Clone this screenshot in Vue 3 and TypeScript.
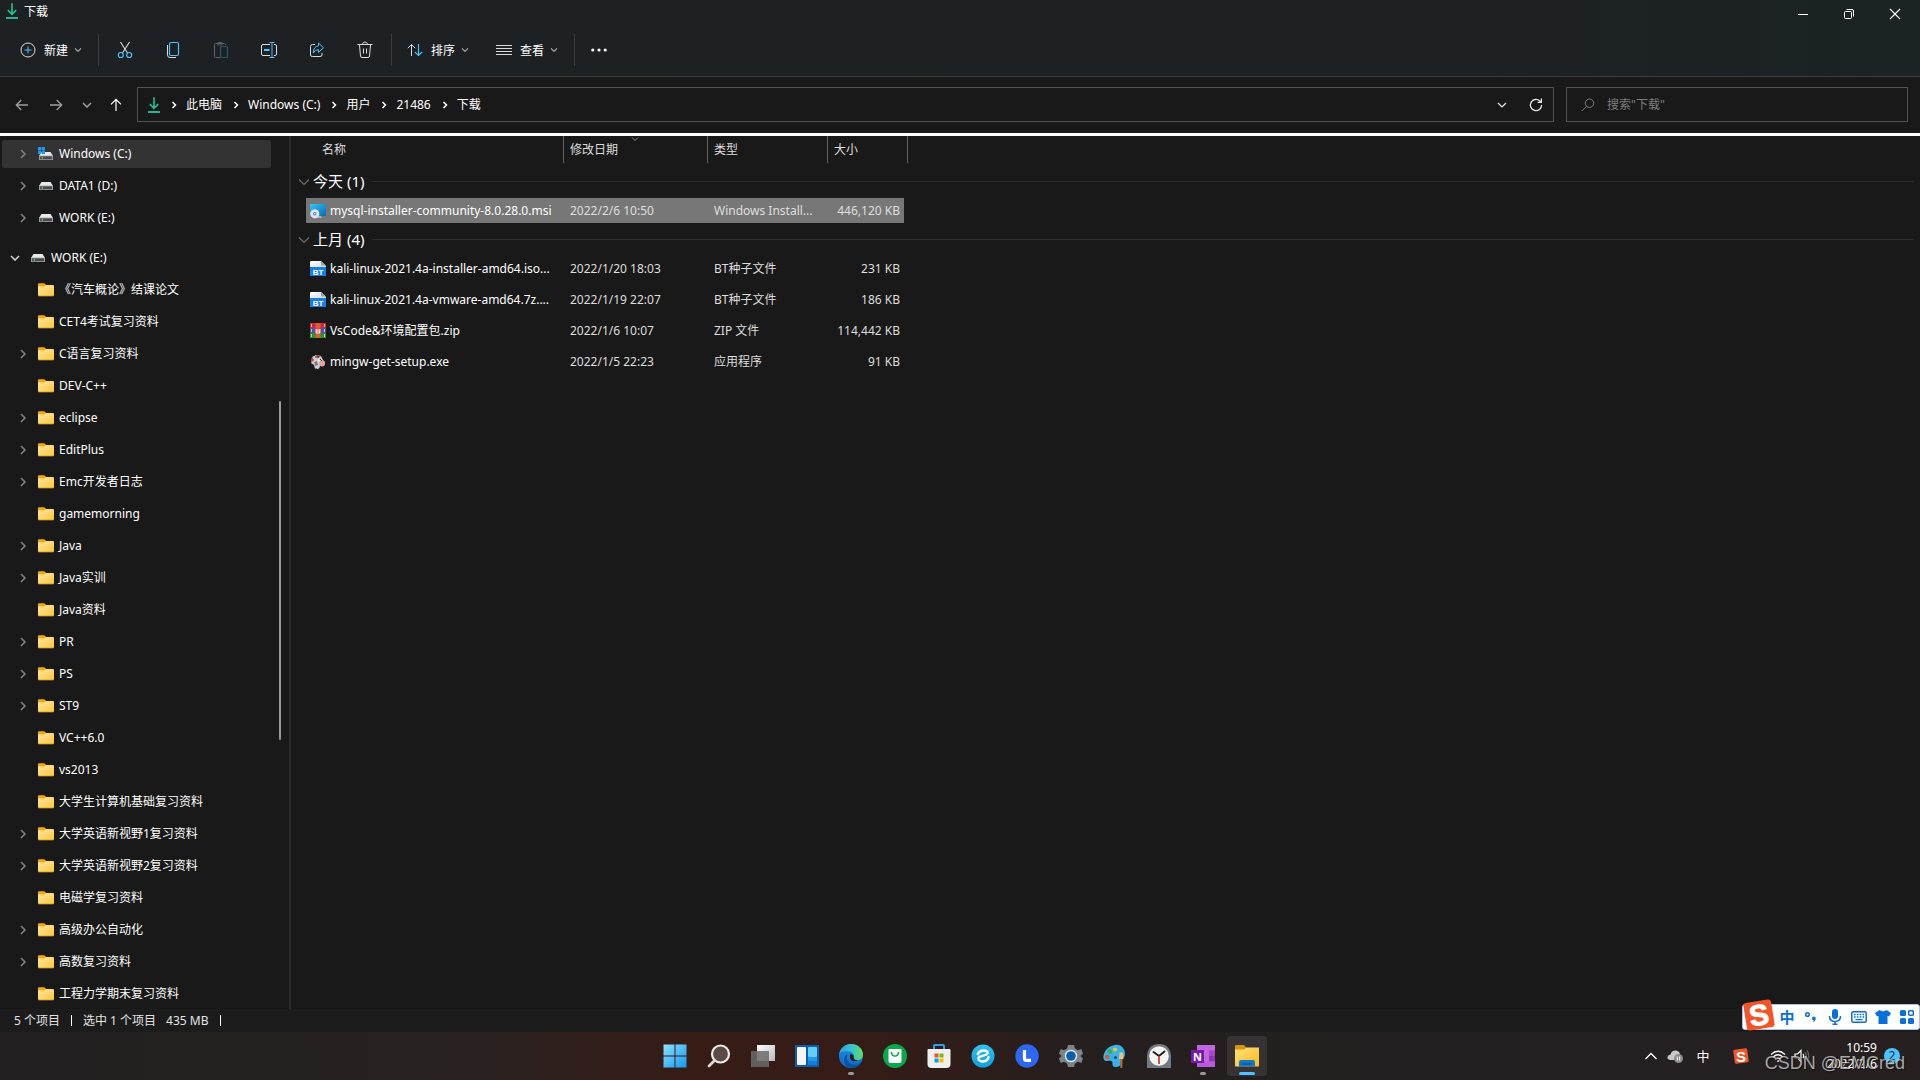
<script setup lang="ts">
import { ref } from 'vue'

interface TreeNode {
  label: string
  expandable: boolean
}

interface FileRow {
  name: string
  date: string
  type: string
  size: string
  icon: 'msi' | 'bt' | 'zip' | 'exe'
}

interface FileGroup {
  label: string
  rows: FileRow[]
}

const drives = ['Windows (C:)', 'DATA1 (D:)', 'WORK (E:)']

const folders: TreeNode[] = [
  { label: '《汽车概论》结课论文', expandable: false },
  { label: 'CET4考试复习资料', expandable: false },
  { label: 'C语言复习资料', expandable: true },
  { label: 'DEV-C++', expandable: false },
  { label: 'eclipse', expandable: true },
  { label: 'EditPlus', expandable: true },
  { label: 'Emc开发者日志', expandable: true },
  { label: 'gamemorning', expandable: false },
  { label: 'Java', expandable: true },
  { label: 'Java实训', expandable: true },
  { label: 'Java资料', expandable: false },
  { label: 'PR', expandable: true },
  { label: 'PS', expandable: true },
  { label: 'ST9', expandable: true },
  { label: 'VC++6.0', expandable: false },
  { label: 'vs2013', expandable: false },
  { label: '大学生计算机基础复习资料', expandable: false },
  { label: '大学英语新视野1复习资料', expandable: true },
  { label: '大学英语新视野2复习资料', expandable: true },
  { label: '电磁学复习资料', expandable: false },
  { label: '高级办公自动化', expandable: true },
  { label: '高数复习资料', expandable: true },
  { label: '工程力学期末复习资料', expandable: false },
]

const groups: FileGroup[] = [
  {
    label: '今天 (1)',
    rows: [
      { name: 'mysql-installer-community-8.0.28.0.msi', date: '2022/2/6 10:50', type: 'Windows Install...', size: '446,120 KB', icon: 'msi' },
    ],
  },
  {
    label: '上月 (4)',
    rows: [
      { name: 'kali-linux-2021.4a-installer-amd64.iso...', date: '2022/1/20 18:03', type: 'BT种子文件', size: '231 KB', icon: 'bt' },
      { name: 'kali-linux-2021.4a-vmware-amd64.7z....', date: '2022/1/19 22:07', type: 'BT种子文件', size: '186 KB', icon: 'bt' },
      { name: 'VsCode&环境配置包.zip', date: '2022/1/6 10:07', type: 'ZIP 文件', size: '114,442 KB', icon: 'zip' },
      { name: 'mingw-get-setup.exe', date: '2022/1/5 22:23', type: '应用程序', size: '91 KB', icon: 'exe' },
    ],
  },
]

const crumbs = ['此电脑', 'Windows (C:)', '用户', '21486', '下载']

const selectedFile = ref('mysql-installer-community-8.0.28.0.msi')
const query = ref('')
</script>

<template>
  <div class="desktop">
    <svg class="defs" width="0" height="0" aria-hidden="true">
      <defs>
        <linearGradient id="g-folder" x1="0" y1="0" x2="1" y2="1">
          <stop offset="0" stop-color="#ffe9a6" />
          <stop offset="1" stop-color="#fbc63c" />
        </linearGradient>
        <linearGradient id="g-win" x1="0" y1="0" x2="1" y2="1">
          <stop offset="0" stop-color="#8fe0ff" />
          <stop offset="1" stop-color="#1398ee" />
        </linearGradient>
        <linearGradient id="g-screen" x1="0" y1="0" x2="1" y2="1">
          <stop offset="0" stop-color="#35c9ee" />
          <stop offset="1" stop-color="#0a66b8" />
        </linearGradient>
        <linearGradient id="g-edge" x1="0" y1="0" x2="1" y2="0">
          <stop offset="0" stop-color="#2aa3e0" />
          <stop offset="0.5" stop-color="#35c1d0" />
          <stop offset="1" stop-color="#63dc5c" />
        </linearGradient>
        <linearGradient id="g-edge2" x1="0" y1="0" x2="0" y2="1">
          <stop offset="0" stop-color="#1c8fe0" />
          <stop offset="1" stop-color="#1169c4" />
        </linearGradient>
        <linearGradient id="g-e" x1="0" y1="0" x2="0" y2="1">
          <stop offset="0" stop-color="#2fc2f2" />
          <stop offset="1" stop-color="#0f9fe0" />
        </linearGradient>
        <linearGradient id="g-front" x1="0" y1="0" x2="1" y2="1">
          <stop offset="0" stop-color="#ffffff" />
          <stop offset="1" stop-color="#b9b9b9" />
        </linearGradient>
        <linearGradient id="g-big-folder" x1="0" y1="0" x2="1" y2="1">
          <stop offset="0" stop-color="#ffdf7c" />
          <stop offset="1" stop-color="#f8bd20" />
        </linearGradient>
        <linearGradient id="g-page" x1="0" y1="0" x2="1" y2="1">
          <stop offset="0" stop-color="#ffffff" />
          <stop offset="1" stop-color="#c9d6e2" />
        </linearGradient>
        <symbol id="i-folder" viewBox="0 0 16 14">
          <path d="M0 1.2Q0 .3 1 .3H6.5L8 2V5H0Z" fill="#f4a90e" />
          <path d="M0 3.5H6.5L8 2H15Q16 2 16 3V12Q16 13 15 13H1Q0 13 0 12Z" fill="url(#g-folder)" />
          <path d="M0 12Q0 13 1 13H15Q16 13 16 12" fill="none" stroke="#d99b1d" stroke-width=".7" />
        </symbol>
        <symbol id="i-drive" viewBox="0 0 14 8">
          <path d="M2.5 0H11.5L14 4H0Z" fill="#e9e9ec" />
          <path d="M0 3.6H14V8H0Z" fill="#9c9ca0" />
          <path d="M1 4.4H13V7.2H1Z" fill="#4b4b4f" />
          <rect x="2.6" y="5.2" width="1.4" height="1.3" fill="#5fe26a" />
        </symbol>
        <symbol id="i-down" viewBox="0 0 12 16">
          <path d="M6 .3V11.5M1.8 7.2 6 11.4 10.2 7.2" fill="none" stroke="#22bd92" stroke-width="1.7" />
          <rect x="0" y="14" width="12" height="2" fill="#1fb695" />
        </symbol>
        <symbol id="i-chev" viewBox="0 0 10 6">
          <path d="M2 1.3 5 4.3 8 1.3" fill="none" stroke="currentColor" stroke-width="1.2" />
        </symbol>
        <symbol id="i-right" viewBox="0 0 8 10">
          <path d="M2 1 6 5 2 9" fill="none" stroke="currentColor" stroke-width="1.6" />
        </symbol>
      </defs>
    </svg>

    <header class="chrome">
      <div class="titlebar">
        <svg width="12" height="16"><use href="#i-down" /></svg>
        <h1>下载</h1>
        <div class="window-buttons">
          <button type="button" aria-label="最小化">
            <svg width="12" height="12" viewBox="0 0 12 12"><path d="M1 6.5H11" stroke="#fff" /></svg>
          </button>
          <button type="button" aria-label="还原">
            <svg width="12" height="12" viewBox="0 0 12 12" fill="none" stroke="#fff"><rect x="1.5" y="3.5" width="7" height="7" rx="1" /><path d="M3.5 1.5H9Q10.5 1.5 10.5 3V8.5" /></svg>
          </button>
          <button type="button" aria-label="关闭">
            <svg width="12" height="12" viewBox="0 0 12 12"><path d="M1 1 11 11M11 1 1 11" stroke="#fff" stroke-width="1.1" /></svg>
          </button>
        </div>
      </div>

      <div class="toolbar" role="toolbar">
        <button type="button" class="tool labelled">
          <svg width="16" height="16" viewBox="0 0 16 16" fill="none"><circle cx="8" cy="8" r="7" stroke="#dcdcdc" /><path d="M8 4.5V11.5M4.5 8H11.5" stroke="#4cc2ff" /></svg>
          <span>新建</span>
          <svg class="chev" width="10" height="6"><use href="#i-chev" /></svg>
        </button>
        <i class="rule"></i>
        <button type="button" class="tool" aria-label="剪切">
          <svg width="16" height="18" viewBox="0 0 16 18" fill="none"><path d="M3.5 1 10.5 12M12.5 1 5.5 12" stroke="#dcdcdc" stroke-width="1.1" /><circle cx="3.8" cy="14" r="2.5" stroke="#4cc2ff" stroke-width="1.2" /><circle cx="12.2" cy="14" r="2.5" stroke="#4cc2ff" stroke-width="1.2" /></svg>
        </button>
        <button type="button" class="tool" aria-label="复制">
          <svg width="16" height="18" viewBox="0 0 16 18" fill="none"><path d="M2.5 4V14Q2.5 16.5 5 16.5H11" stroke="#dcdcdc" /><rect x="4.5" y="1.5" width="9" height="13" rx="1.5" stroke="#4cc2ff" stroke-width="1.2" /></svg>
        </button>
        <button type="button" class="tool" aria-label="粘贴">
          <svg width="16" height="18" viewBox="0 0 16 18" fill="none"><path d="M7 16.5H2.5Q1.5 16.5 1.5 15.5V3.5Q1.5 2.5 2.5 2.5H11.5Q12.5 2.5 12.5 4" stroke="#5f6365" /><rect x="4.5" y="1.5" width="5" height="2.5" rx="1" stroke="#5f6365" /><rect x="7.5" y="5.5" width="7" height="11" rx="1" stroke="#2f5468" stroke-width="1.2" /></svg>
        </button>
        <button type="button" class="tool" aria-label="重命名">
          <svg width="18" height="18" viewBox="0 0 18 18" fill="none"><path d="M10 3.5H3Q1.5 3.5 1.5 5V13Q1.5 14.5 3 14.5H10M14 3.5H15Q16.5 3.5 16.5 5V13Q16.5 14.5 15 14.5H14" stroke="#dcdcdc" /><path d="M12 1.5V16.5M9.5 1.5H14.5M9.5 16.5H14.5" stroke="#4cc2ff" /><path d="M4 9H9.5" stroke="#4cc2ff" stroke-width="2" /></svg>
        </button>
        <button type="button" class="tool" aria-label="共享">
          <svg width="16" height="18" viewBox="0 0 16 18" fill="none"><path d="M6 3.5H3.5Q1.5 3.5 1.5 5.5V14Q1.5 15.5 3.5 15.5H11Q13 15.5 13 14V12" stroke="#dcdcdc" /><path d="M9.5 2 14.5 6.8 9.5 11.5V8.7Q6 8.7 4.2 12 4.5 5.5 9.5 4.8Z" stroke="#4cc2ff" stroke-linejoin="round" /></svg>
        </button>
        <button type="button" class="tool" aria-label="删除">
          <svg width="16" height="18" viewBox="0 0 16 18" fill="none" stroke="#dcdcdc"><path d="M.5 3.500H15.500M5.500 3Q6 1 8 1T10.500 3M2.500 4 3.500 15Q3.700 16.500 5 16.500H11Q12.300 16.500 12.500 15L13.500 4M6.500 7.500V12.500M9.500 7.500V12.500" /></svg>
        </button>
        <i class="rule"></i>
        <button type="button" class="tool labelled">
          <svg width="16" height="14" viewBox="0 0 16 14" fill="none"><path d="M4.5 13V1.5M.8 5.2 4.5 1.5 8.2 5.2" stroke="#dcdcdc" /><path d="M11.5 1V12.5M7.8 8.8 11.5 12.5 15.2 8.8" stroke="#4cc2ff" stroke-width="1.2" /></svg>
          <span>排序</span>
          <svg class="chev" width="10" height="6"><use href="#i-chev" /></svg>
        </button>
        <button type="button" class="tool labelled">
          <svg width="16" height="12" viewBox="0 0 16 12"><path d="M0 1.5H16M0 4.5H16M0 7.5H16M0 10.5H16" stroke="#dcdcdc" /></svg>
          <span>查看</span>
          <svg class="chev" width="10" height="6"><use href="#i-chev" /></svg>
        </button>
        <i class="rule"></i>
        <button type="button" class="tool more" aria-label="更多">
          <svg width="16" height="4" viewBox="0 0 16 4" fill="#fff"><circle cx="1.8" cy="2" r="1.6" /><circle cx="8" cy="2" r="1.6" /><circle cx="14.2" cy="2" r="1.6" /></svg>
        </button>
      </div>
    </header>

    <div class="navrow">
      <button type="button" class="nav dim" aria-label="后退">
        <svg width="14" height="12" viewBox="0 0 14 12" fill="none" stroke="currentColor" stroke-width="1.3"><path d="M13 6H1.5M6.3 1 1.3 6 6.3 11" /></svg>
      </button>
      <button type="button" class="nav dim" aria-label="前进">
        <svg width="14" height="12" viewBox="0 0 14 12" fill="none" stroke="currentColor" stroke-width="1.3"><path d="M1 6H12.5M7.7 1 12.7 6 7.7 11" /></svg>
      </button>
      <button type="button" class="nav narrow dim" aria-label="最近位置">
        <svg width="10" height="6" viewBox="0 0 10 6" fill="none" stroke="currentColor" stroke-width="1.5"><path d="M1 1 5 5 9 1" /></svg>
      </button>
      <button type="button" class="nav up" aria-label="上移">
        <svg width="12" height="14" viewBox="0 0 12 14" fill="none" stroke="#fff" stroke-width="1.2"><path d="M6 13V1.5M1 6.3 6 1.3 11 6.3" /></svg>
      </button>
      <nav class="address" aria-label="地址">
        <svg width="12" height="16"><use href="#i-down" /></svg>
        <template v-for="c in crumbs" :key="c">
          <svg class="sep" width="8" height="10" viewBox="0 0 8 10"><path d="M2.5 2 5.5 5 2.5 8" fill="none" stroke="#fff" stroke-width="1.5" /></svg>
          <a href="#">{{ c }}</a>
        </template>
        <span class="grow"></span>
        <button type="button" class="nav" aria-label="历史记录">
          <svg width="10" height="6" viewBox="0 0 10 6" fill="none" stroke="#e8e8e8" stroke-width="1.2"><path d="M1 1 5 5 9 1" /></svg>
        </button>
        <button type="button" class="nav" aria-label="刷新">
          <svg width="14" height="14" viewBox="0 0 14 14" fill="none" stroke="#e8e8e8" stroke-width="1.3"><path d="M12.6 7A5.6 5.6 0 1 1 10.8 2.9L12 4" /><path d="M12.4 .5V4.3H8.6" /></svg>
        </button>
      </nav>
      <label class="search">
        <svg width="14" height="14" viewBox="0 0 14 14" fill="none" stroke="#7b7b7b"><circle cx="8.5" cy="5.2" r="4.2" /><path d="M5.5 8.3 .8 13" /></svg>
        <input v-model="query" type="text" placeholder="搜索&quot;下载&quot;" aria-label="搜索" />
      </label>
    </div>

    <main class="body">
      <aside class="sidebar">
        <ul>
          <li v-for="(d, i) in drives" :key="d">
            <button type="button" class="node" :class="{ current: i === 0 }">
              <svg class="twist" width="8" height="10"><use href="#i-right" /></svg>
              <svg v-if="i === 0" class="glyph" width="16" height="14" viewBox="0 0 16 14">
                <use href="#i-drive" x="1" y="5" width="14" height="8" />
                <path d="M0 0H3.2V3.2H0ZM3.8 0H7V3.2H3.8ZM0 3.8H3.2V7H0ZM3.8 3.8H7V7H3.8Z" fill="#1b9bea" />
              </svg>
              <svg v-else class="glyph" width="16" height="8"><use href="#i-drive" x="1" width="14" height="8" /></svg>
              <span>{{ d }}</span>
            </button>
          </li>
        </ul>
        <ul class="tree">
          <li>
            <button type="button" class="node root">
              <svg width="10" height="6" viewBox="0 0 10 6" fill="none" stroke="#d0d0d0" stroke-width="1.6"><path d="M1 1 5 5 9 1" /></svg>
              <svg class="glyph" width="16" height="8"><use href="#i-drive" x="1" width="14" height="8" /></svg>
              <span>WORK (E:)</span>
            </button>
          </li>
          <li v-for="f in folders" :key="f.label">
            <button type="button" class="node">
              <svg class="twist" width="8" height="10"><use v-if="f.expandable" href="#i-right" /></svg>
              <svg class="glyph" width="16" height="14"><use href="#i-folder" /></svg>
              <span>{{ f.label }}</span>
            </button>
          </li>
        </ul>
        <div class="thumb"></div>
      </aside>

      <section class="listing">
        <table>
          <colgroup>
            <col class="c-name" /><col class="c-date" /><col class="c-type" /><col class="c-size" /><col />
          </colgroup>
          <thead>
            <tr>
              <th scope="col"><div class="head first">名称</div></th>
              <th scope="col">
                <div class="head">修改日期
                  <svg class="sorted" width="8" height="5" viewBox="0 0 8 5"><path d="M1 .5 4 3.5 7 .5" fill="none" stroke="#8a8a8a" /></svg>
                </div>
              </th>
              <th scope="col"><div class="head">类型</div></th>
              <th scope="col"><div class="head">大小</div></th>
              <td></td>
            </tr>
          </thead>
          <tbody v-for="g in groups" :key="g.label">
            <tr class="group">
              <th colspan="5" scope="rowgroup">
                <div>
                  <svg width="12" height="8" viewBox="0 0 12 8"><path d="M1 1.5 6 6.5 11 1.5" fill="none" stroke="#6b6b6b" stroke-width="1.2" /></svg>
                  <span>{{ g.label }}</span>
                  <hr />
                </div>
              </th>
            </tr>
            <tr v-for="r in g.rows" :key="r.name" class="file" :class="{ selected: r.name === selectedFile }" @click="selectedFile = r.name">
              <td>
                <div class="cell name">
                  <svg v-if="r.icon === 'msi'" width="16" height="16" viewBox="0 0 16 16">
                    <rect x="0" y="1" width="16" height="12" rx=".5" fill="url(#g-screen)" />
                    <path d="M4 15 6 13H11L12 15Z" fill="#a9b3ba" />
                    <circle cx="4.8" cy="10.800" r="4.600" fill="#dde3e8" />
                    <circle cx="4.8" cy="10.800" r="1.700" fill="#3c86b8" />
                    <circle cx="4.8" cy="10.800" r=".800" fill="#fff" />
                  </svg>
                  <svg v-else-if="r.icon === 'bt'" width="16" height="16" viewBox="0 0 16 16">
                    <path d="M0 1Q0 0 1 0H11L16 5V8H0Z" fill="url(#g-page)" />
                    <path d="M11 0V4.5H16Z" fill="#8fa5b8" />
                    <rect x="0" y="6" width="16" height="9" fill="#1a7fe0" />
                    <text x="8" y="14" text-anchor="middle" font-size="8" font-weight="700" fill="#fff" font-family="Liberation Sans, sans-serif">BT</text>
                  </svg>
                  <svg v-else-if="r.icon === 'zip'" width="16" height="16" viewBox="0 0 16 16">
                    <rect y="0" width="16" height="5" fill="#c8264a" />
                    <rect y="5" width="16" height="5" fill="#4a56b5" />
                    <rect y="10" width="16" height="5" fill="#1f9440" />
                    <path d="M1.5 1V4M1.5 6V9M1.5 11V14M14.5 1V4M14.5 6V9M14.5 11V14" stroke="#e8c85a" />
                    <rect x="5.5" width="5" height="15" fill="#d9602c" />
                    <rect x="5" y="5" width="6" height="6" rx="1" fill="#e8452c" />
                    <path d="M6.2 6V10H9.8V6M8 6V9" fill="none" stroke="#fff" />
                  </svg>
                  <svg v-else width="16" height="16" viewBox="0 0 16 16">
                    <path d="M2 3 6 1 11 2 13 6 15 8 14 12 10 12 9 15H5L4 11 1 9Z" fill="#cfcfcf" />
                    <path d="M2 3 4 6 1 9ZM6 1 8 4 11 2Z" fill="#c23b3b" />
                    <path d="M4 8 7 7 8 11 5 12Z" fill="#7b7f86" />
                    <circle cx="12" cy="9.5" r="3" fill="#e5a3a3" />
                    <path d="M5 3H9M10 5 12 7M6 14V16M9 14V16" stroke="#2b2b2b" />
                    <path d="M8 5 10 7 8 8Z" fill="#fff" />
                  </svg>
                  <span>{{ r.name }}</span>
                </div>
              </td>
              <td><div class="cell">{{ r.date }}</div></td>
              <td><div class="cell">{{ r.type }}</div></td>
              <td><div class="cell size">{{ r.size }}</div></td>
              <td></td>
            </tr>
          </tbody>
        </table>
      </section>
    </main>

    <footer class="status">
      <span>5 个项目</span><i></i><span>选中 1 个项目</span><span class="amount">435 MB</span><i></i>
    </footer>

    <div class="taskbar">
      <div></div>
      <div class="apps">
        <button type="button" aria-label="开始">
          <svg width="24" height="24" viewBox="0 0 24 24"><path d="M.5 .5H11.5V11.5H.5ZM12.5 .5H23.5V11.5H12.5ZM.5 12.5H11.5V23.5H.5ZM12.5 12.5H23.5V23.5H12.5Z" fill="url(#g-win)" /></svg>
        </button>
        <button type="button" aria-label="搜索">
          <svg width="24" height="24" viewBox="0 0 24 24"><circle cx="13.5" cy="10" r="8.5" fill="#5d4a46" stroke="#ececec" stroke-width="2.2" /><path d="M7.5 16.5 2 22" stroke="#d8d8d8" stroke-width="2.8" stroke-linecap="round" /></svg>
        </button>
        <button type="button" aria-label="任务视图">
          <svg width="24" height="24" viewBox="0 0 24 24"><rect x="6" y="1" width="18" height="16" fill="url(#g-front)" /><rect x="0" y="7" width="18" height="16" fill="#6b6b6b" opacity=".85" /></svg>
        </button>
        <button type="button" aria-label="小组件">
          <svg width="24" height="24" viewBox="0 0 24 24"><rect x="0" y="1" width="24" height="22" rx="1" fill="#0d5db0" /><rect x="2" y="3" width="9" height="18" rx="1" fill="#f4f4f4" /><rect x="13" y="3" width="9" height="10" rx="1" fill="#63cdfb" /><rect x="13" y="13" width="9" height="4" fill="#1f9bea" /><rect x="13" y="17" width="9" height="4" fill="#157fd6" /></svg>
        </button>
        <button type="button" class="running" aria-label="Microsoft Edge">
          <svg width="24" height="24" viewBox="0 0 24 24"><circle cx="12" cy="12" r="12" fill="url(#g-edge2)" /><path d="M.3 9.5C1.5 4 6.3 0 12 0 19 0 24 5 24 10.5 24 14 21.5 16 18.5 16 15.5 16 14.3 14.8 14.8 13.8 15.8 12 14.6 8.2 10.5 7.6 6.5 7 2.5 7.5 .3 9.5Z" fill="url(#g-edge)" /><path d="M9 10C7 12 7.5 17.5 12 19.8 15.5 21.5 19.5 20.5 22.4 18 20.5 21.8 16.5 24 12 24 7 24 4.5 19 5 15.5 5.4 12.5 7 10.8 9 10Z" fill="#0d55a4" /><path d="M11.5 10Q15.2 10.5 14.7 13.6C14.3 15 15.5 16.2 18.5 16.2 15.5 18.5 11 16.5 11 13.5Q10.8 11 11.5 10Z" fill="#301b17" /></svg>
        </button>
        <button type="button" aria-label="应用商店">
          <svg width="24" height="24" viewBox="0 0 24 24"><circle cx="12" cy="12" r="12" fill="#0aa84c" /><path d="M5.5 6Q5.5 5 6.5 5H17.5Q18.5 5 18.5 6V17Q18.5 19 16.5 19H7.5Q5.5 19 5.5 17Z" fill="#fff" /><path d="M8.5 8.5Q9 12 12 12T15.500 8.500" fill="none" stroke="#0aa84c" stroke-width="1.6" stroke-linecap="round" /></svg>
        </button>
        <button type="button" aria-label="Microsoft Store">
          <svg width="24" height="24" viewBox="0 0 24 24"><path d="M7 6V2Q7 1 8 1H16Q17 1 17 2V6" fill="none" stroke="#2aa5ea" stroke-width="2" /><path d="M.5 6Q.5 5 1.5 5H22.5Q23.5 5 23.5 6V20Q23.5 24 19.5 24H4.5Q.5 24 .5 20Z" fill="#efefef" /><rect x="7.5" y="9.5" width="4" height="4" fill="#f25022" /><rect x="12.5" y="9.5" width="4" height="4" fill="#7fba00" /><rect x="7.5" y="14.5" width="4" height="4" fill="#00a4ef" /><rect x="12.5" y="14.5" width="4" height="4" fill="#ffb900" /></svg>
        </button>
        <button type="button" aria-label="浏览器">
          <svg width="24" height="24" viewBox="0 0 24 24"><circle cx="12" cy="12" r="11.5" fill="url(#g-e)" /><path d="M6.8 10.2Q8.5 6.5 12.5 6.5 17 6.8 16.6 9.2 15.8 10.8 12.5 11.6L8.5 12.8Q6.600 13.800 8 16 10 18 13.500 17.300 16.800 16.300 17.600 13" fill="none" stroke="#fff" stroke-width="2.4" stroke-linecap="round" /></svg>
        </button>
        <button type="button" aria-label="联想">
          <svg width="24" height="24" viewBox="0 0 24 24"><circle cx="12" cy="12" r="11.7" fill="#2f66f2" /><path d="M9.5 6V14.5Q9.5 16.3 11.3 16.3H16" fill="none" stroke="#fff" stroke-width="3.2" /></svg>
        </button>
        <button type="button" aria-label="设置">
          <svg width="24" height="24" viewBox="0 0 24 24"><path d="M9 1H15L16 4.5 19 6.2 22.3 5 24 9.5 21.5 12 24 14.5 22.3 19 19 17.8 16 19.5 15 23H9L8 19.5 5 17.8 1.7 19 0 14.5 2.5 12 0 9.5 1.7 5 5 6.2 8 4.5Z" fill="#7d858c" /><circle cx="12" cy="12" r="6.2" fill="#e6edf3" /><circle cx="12" cy="12" r="4.8" fill="#0f5ea8" /></svg>
        </button>
        <button type="button" aria-label="画图">
          <svg width="24" height="24" viewBox="0 0 24 24"><path d="M12 1C18 0 22.5 5 22 11 21.7 14 19 14 18 16 17 19 19 23 13 23 10 23 9 21 9.5 18.5 9.7 16.5 7 16.5 4.5 17 1.5 17.5 0 15 .5 12 1.3 6.5 6 1.5 12 1Z" fill="#35b2ea" /><circle cx="12" cy="5.5" r="2.1" fill="#f6c12c" /><circle cx="7" cy="7.8" r="2.2" fill="#4aa83a" /><circle cx="4.2" cy="13" r="2.2" fill="#e2552c" /><circle cx="12.5" cy="13.5" r="1.6" fill="#16527c" /><path d="M16.5 8.5H20L20.5 15H16Z" fill="#efc27e" /><path d="M17 15H19.6L19.2 24H17.4Z" fill="#b3713a" /></svg>
        </button>
        <button type="button" aria-label="时钟">
          <svg width="24" height="24" viewBox="0 0 24 24"><path d="M0 12Q1 0 12 0T24 12V24H0Z" fill="#6f7a83" /><circle cx="12" cy="12" r="9.8" fill="#f4f4f4" /><path d="M12 12 6.5 8M12 12 17.5 7.5" stroke="#222" stroke-width="2" stroke-linecap="round" /><path d="M12 12V20" stroke="#c8442c" stroke-width="1.8" /></svg>
        </button>
        <button type="button" class="running" aria-label="OneNote">
          <svg width="24" height="24" viewBox="0 0 24 24"><path d="M6 1H24V23H6Z" fill="#c266e0" /><path d="M18 6.5H24V12H18Z" fill="#a944cc" /><path d="M18 12H24V17.5H18Z" fill="#8e35b8" /><path d="M6 17.5H24V23H6Z" fill="#b04fd6" opacity=".5" /><rect x="0" y="6" width="13" height="13" fill="#7719aa" /><text x="6.5" y="16.5" text-anchor="middle" font-size="11" font-weight="700" fill="#fff" font-family="Open Sans, sans-serif">N</text></svg>
        </button>
        <button type="button" class="active" aria-label="文件资源管理器">
          <svg width="24" height="24" viewBox="0 0 24 24"><path d="M0 2Q0 1 1 1H9L11 3.5V7H0Z" fill="#d8960c" /><path d="M0 5.5H9.5L11 3.5H24V22.5H0Z" fill="url(#g-big-folder)" /><path d="M4 22.5V18Q4 16 6 16H18Q20 16 20 18V22.5Z" fill="#1577c4" /><path d="M7 20H17" stroke="#0c5c9c" stroke-width="1.6" /></svg>
        </button>
      </div>

      <div class="tray">
        <button type="button" class="t-icon" aria-label="显示隐藏的图标">
          <svg width="14" height="8" viewBox="0 0 14 8"><path d="M1.5 7 7 1.5 12.5 7" fill="none" stroke="#fff" stroke-width="1.3" /></svg>
        </button>
        <button type="button" class="t-icon" aria-label="OneDrive">
          <svg width="16" height="14" viewBox="0 0 16 14"><path d="M4 11Q0 11 .5 8 1 5.5 3.5 5.5 4.5 1.5 8.5 1.5 12 1.5 13 5V11Z" fill="#c9c9c9" /><circle cx="11.5" cy="9.5" r="4.5" fill="#8d8d8d" /><path d="M10.3 7.5V11.5M12.7 7.5V11.5" stroke="#fff" /></svg>
        </button>
        <button type="button" class="t-icon lang">中</button>
        <button type="button" class="t-icon sogou" aria-label="搜狗输入法">
          <svg width="16" height="16" viewBox="0 0 32 32"><rect x="2" y="2" width="28" height="28" rx="3" fill="#f0562a" transform="rotate(-8 16 16)" /><text x="16" y="27" text-anchor="middle" font-size="30" font-weight="700" fill="#fff" font-family="Liberation Sans, sans-serif">S</text></svg>
        </button>
        <button type="button" class="t-icon" aria-label="网络">
          <svg width="16" height="14" viewBox="0 0 16 14" fill="none" stroke="#fff" stroke-width="1.2"><path d="M1 5.5Q8-1 15 5.5M3.2 8Q8 3.5 12.8 8M5.5 10.3Q8 8 10.5 10.3" /><circle cx="8" cy="12" r="1" fill="#fff" stroke="none" /></svg>
        </button>
        <button type="button" class="t-icon" aria-label="音量">
          <svg width="16" height="14" viewBox="0 0 16 14" fill="none" stroke-width="1.2"><path d="M1 5H3.5L7 1.5V12.5L3.5 9H1Z" stroke="#fff" /><path d="M9 4.8Q10.5 7 9 9.2" stroke="#fff" /><path d="M11 3Q13.5 7 11 11M13 1.5Q16.5 7 13 12.5" stroke="#6a6668" /></svg>
        </button>
        <time class="clock" datetime="2022-02-06T10:59"><span>10:59</span><span>2022/2/6</span></time>
        <span class="badge">2</span>
      </div>
    </div>

    <div class="ime">
      <svg class="ime-logo" width="32" height="32" viewBox="0 0 32 32"><rect x="2" y="2" width="28" height="28" rx="3" fill="#f0562a" transform="rotate(-9 16 16)" /><text x="16" y="26" text-anchor="middle" font-size="29" font-weight="700" fill="#fff" stroke="#fff" font-family="Liberation Sans, sans-serif" transform="rotate(-9 16 16)">S</text></svg>
      <button type="button" class="zh">中</button>
      <button type="button" aria-label="标点">
        <svg width="14" height="14" viewBox="0 0 14 14"><circle cx="3.5" cy="4.5" r="1.8" fill="none" stroke="#0a6fd8" stroke-width="1.5" /><path d="M8 8.5Q8 6.5 9.8 6.5 12 6.7 11.8 9 11.3 11.5 8.5 12.5 9.7 11.3 9.8 10.3 8 10 8 8.5Z" fill="#0a6fd8" /></svg>
      </button>
      <button type="button" aria-label="语音">
        <svg width="14" height="16" viewBox="0 0 14 16"><rect x="4" y="0" width="6" height="10" rx="3" fill="#0a6fd8" /><path d="M1.5 7Q1.5 12.5 7 12.5T12.500 7M7 12.500V15M4.500 15.200H9.500" fill="none" stroke="#0a6fd8" stroke-width="1.5" /></svg>
      </button>
      <button type="button" aria-label="键盘">
        <svg width="16" height="12" viewBox="0 0 16 12" fill="none" stroke="#0a6fd8"><rect x=".8" y=".8" width="14.4" height="10.4" rx="1.5" stroke-width="1.5" /><path d="M3 3.5H13M3 6H13" stroke-width="1.5" stroke-dasharray="1.6 1.2" /><path d="M4.5 8.6H11.5" stroke-width="1.3" /></svg>
      </button>
      <button type="button" aria-label="皮肤">
        <svg width="16" height="14" viewBox="0 0 16 14"><path d="M4.5 0Q8 2.5 11.5 0L16 3 14 6.5 12.5 6V14H3.5V6L2 6.5 0 3Z" fill="#0a6fd8" /></svg>
      </button>
      <button type="button" aria-label="工具箱">
        <svg width="14" height="14" viewBox="0 0 14 14" fill="#0a6fd8"><rect x="0" y="0" width="6" height="6" rx="1.5" /><rect x="8.7" y=".7" width="4.6" height="4.6" rx="1" fill="none" stroke="#0a6fd8" stroke-width="1.5" /><rect x="0" y="8" width="6" height="6" rx="1.5" /><rect x="8" y="8" width="6" height="6" rx="1.5" /></svg>
      </button>
    </div>

    <p class="watermark">CSDN @EMCred</p>
  </div>
</template>

<style>
body {
  margin: 0;
  background: #191919;
}
</style>

<style scoped>
.desktop {
  position: relative;
  display: flex;
  flex-direction: column;
  min-height: 100vh;
  overflow: hidden;
  background: #191919;
  color: #fff;
  font: 12px/16px "Noto Sans", "Noto Sans CJK SC", sans-serif;
}
.defs {
  position: absolute;
}
button {
  display: flex;
  align-items: center;
  justify-content: center;
  margin: 0;
  padding: 0;
  border: 0;
  background: none;
  color: inherit;
  font: inherit;
}
svg {
  display: block;
  flex: none;
}
h1,
p,
ul {
  margin: 0;
  padding: 0;
  font: inherit;
  list-style: none;
}

/* Title bar and command bar */
.chrome {
  border-bottom: 1px solid #3d3d3d;
  background: linear-gradient(90deg, #1d2124, #1e2122 40%, #1e2124 75%, #1b2325);
}
.titlebar {
  display: flex;
  align-items: flex-start;
  gap: 6px;
  height: 24px;
  padding: 3px 2px 0 6px;
  box-sizing: border-box;
}
.titlebar h1 {
  line-height: 18px;
}
.window-buttons {
  display: flex;
  margin-left: auto;
}
.window-buttons button {
  width: 46px;
  height: 22px;
}
.toolbar {
  display: flex;
  align-items: center;
  height: 52px;
  padding-left: 7px;
}
.tool {
  width: 48px;
  height: 32px;
}
.tool.labelled {
  width: auto;
  padding: 0 13px;
}
.tool.more {
  width: 44px;
}
.tool span {
  margin: 0 5px 0 8px;
  padding-top: 2px;
}
.chev {
  color: #a5a8a9;
}
.rule {
  width: 1px;
  height: 32px;
  margin: 0 2px;
  background: #3a3d3e;
}

/* Address row */
.navrow {
  display: flex;
  align-items: center;
  height: 55px;
  padding: 0 12px 1px 5px;
  border-bottom: 3px solid #fff;
}
.nav {
  width: 34px;
  height: 32px;
}
.nav.narrow {
  width: 28px;
}
.nav.up {
  width: 30px;
  margin-right: 6px;
}
.nav.dim {
  color: #a0a0a0;
}
.address,
.search {
  display: flex;
  align-items: center;
  height: 35px;
  box-sizing: border-box;
  border: 1px solid #535353;
}
.address {
  flex: 1;
  padding: 0 0 0 10px;
}
.address a {
  color: #fff;
  text-decoration: none;
  white-space: nowrap;
}
.sep {
  margin: 0 8px 0 10px;
}
.grow {
  flex: 1;
}
.search {
  width: 342px;
  margin-left: 12px;
  padding-left: 14px;
  gap: 12px;
}
.search input {
  flex: 1;
  min-width: 0;
  padding: 0;
  border: 0;
  outline: 0;
  background: none;
  color: #fff;
  font: inherit;
}
.search input::placeholder {
  color: #7d7d7d;
  opacity: 1;
}

/* Folder tree */
.body {
  display: flex;
  flex: 1;
}
.sidebar {
  position: relative;
  flex: none;
  width: 289px;
  padding-top: 4px;
  padding-bottom: 1px;
  border-right: 2px solid #2b2b2b;
}
.sidebar li {
  margin-bottom: 4px;
}
.sidebar li:last-child {
  margin-bottom: 0;
}
.tree {
  margin-top: 12px;
}
.node {
  justify-content: flex-start;
  width: 269px;
  height: 28px;
  margin-left: 2px;
  padding-left: 17px;
  box-sizing: border-box;
  border-radius: 2px;
  white-space: nowrap;
}
.node.current {
  background: #333;
}
.node.root {
  padding-left: 8px;
}
.twist {
  color: #808080;
}
.glyph {
  margin: 0 5px 0 11px;
}
.node.root .glyph {
  margin-left: 10px;
}
.thumb {
  position: absolute;
  top: 265px;
  right: 8px;
  width: 2px;
  height: 339px;
  border-radius: 1px;
  background: #9a9a9a;
}

/* File list */
.listing {
  flex: 1;
  min-width: 0;
  padding-right: 7px;
}
table {
  width: 100%;
  table-layout: fixed;
  border-collapse: collapse;
}
th,
td {
  padding: 0;
  font-weight: 400;
  text-align: left;
  white-space: nowrap;
}
.c-name {
  width: 273px;
}
.c-date {
  width: 144px;
}
.c-type {
  width: 120px;
}
.c-size {
  width: 80px;
}
.head {
  position: relative;
  height: 27px;
  margin-bottom: 5px;
  padding-left: 6px;
  box-sizing: border-box;
  border-right: 1px solid #636363;
  color: #dedede;
  line-height: 28px;
}
.head.first {
  padding-left: 31px;
}
.sorted {
  position: absolute;
  top: 1px;
  left: 67px;
}
.group div {
  display: flex;
  align-items: center;
  height: 27px;
  padding-left: 7px;
  font-size: 15px;
}
.group span {
  margin: 0 8px 0 3px;
  padding-bottom: 2px;
}
.group hr {
  flex: 1;
  height: 1px;
  margin: 0;
  border: 0;
  background: #2e2e2e;
}
.cell {
  height: 25px;
  margin: 3px 0;
  padding-left: 6px;
  box-sizing: border-box;
  color: #dedede;
  line-height: 25px;
}
.cell.name {
  display: flex;
  align-items: center;
  gap: 4px;
  margin-left: 15px;
  padding-left: 4px;
  color: #fff;
}
.cell.size {
  margin-right: 4px;
  padding-right: 4px;
  text-align: right;
}
.selected .cell {
  background: #777;
}

/* Status bar */
.status {
  display: flex;
  align-items: center;
  height: 23px;
  padding-left: 14px;
  background: #1c1c1c;
  color: #e4e4e4;
}
.status i {
  width: 1px;
  height: 11px;
  margin: 0 11px;
  background: #fff;
}
.amount {
  margin-left: 10px;
}

/* Taskbar */
.taskbar {
  display: grid;
  grid-template-columns: 1fr auto 1fr;
  align-items: center;
  height: 48px;
  padding-left: 2px;
  background: linear-gradient(90deg, #222021, #282120 25%, #371c16 36%, #341c17 46%, #251f1e 56%, #242021 75%, #262021);
}
.apps {
  display: flex;
}
.apps button {
  position: relative;
  width: 44px;
  height: 40px;
}
.apps .running::after,
.apps .active::after {
  content: "";
  position: absolute;
  bottom: 1px;
  left: 19px;
  width: 6px;
  height: 3px;
  border-radius: 2px;
  background: #9b9797;
}
.apps .active {
  width: 40px;
  margin: 0 2px;
  border-radius: 4px;
  background: #373334;
}
.apps .active::after {
  left: 12px;
  width: 16px;
  background: #4cc2ff;
}
.tray {
  display: flex;
  align-items: center;
  justify-content: flex-end;
  padding-right: 20px;
}
.t-icon {
  width: 24px;
  height: 32px;
}
.lang {
  width: 32px;
  font-size: 13px;
}
.sogou {
  width: 44px;
  margin-right: 3px;
}
.clock {
  display: flex;
  flex-direction: column;
  width: 63px;
  text-align: right;
}
.badge {
  width: 16px;
  height: 16px;
  margin-left: 7px;
  border-radius: 8px;
  background: #4cc2ff;
  color: #15303c;
  text-align: center;
}

/* Floating input method bar */
.ime {
  position: absolute;
  right: 0;
  bottom: 50px;
  display: flex;
  align-items: center;
  height: 26px;
  padding-left: 32px;
  box-sizing: border-box;
  border: 1px solid #a9c3ea;
  border-radius: 3px;
  background: #fff;
}
.ime button {
  width: 24px;
  height: 24px;
}
.ime .zh {
  color: #0a6fd8;
  font-size: 15px;
  font-weight: 700;
}
.ime-logo {
  position: absolute;
  left: 0;
  bottom: -2px;
}

.watermark {
  position: absolute;
  right: 15px;
  bottom: 6px;
  color: rgba(215, 215, 215, 0.75);
  font: 18px/22px "Liberation Sans", sans-serif;
  text-shadow: 1px 1px 1px #111;
}
</style>
